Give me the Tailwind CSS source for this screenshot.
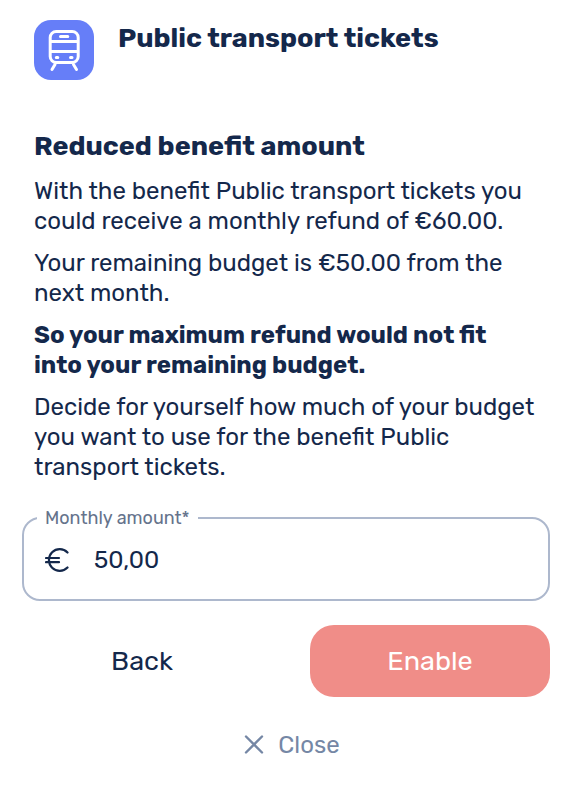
<!DOCTYPE html>
<html lang="en">
<head>
<meta charset="utf-8">
<meta name="viewport" content="width=device-width, initial-scale=1">
<title>Public transport tickets</title>
<script src="https://cdn.jsdelivr.net/npm/@tailwindcss/browser@4"></script>
</head>
<body class="bg-white font-[Rubik,Roboto,sans-serif] text-[#14284b]">
<main class="pt-5 pr-7 pl-[22px]">
  <header class="flex items-start gap-6 px-3">
    <svg class="size-[60px] shrink-0" viewBox="0 0 60 60" fill="none" stroke="#fff" stroke-width="3" stroke-linecap="round" stroke-linejoin="round" aria-hidden="true">
      <rect width="60" height="60" rx="17" fill="#667ef8" stroke="none"/>
      <rect x="16.200" y="11.500" width="28" height="31" rx="6"/>
      <path d="M16 21.500h28M16 31.500h28" stroke-linecap="butt"/>
      <path d="M26.500 16.500h7.300M22.300 37.500h1.500M36.500 37.500h1.500M21 44.500l-3 5M39.500 44.500l3 5"/>
    </svg>
    <h1 class="text-[27px] leading-9 font-bold">Public transport tickets</h1>
  </header>

  <section class="mt-[50px] px-3 text-2xl leading-[30px]">
    <h2 class="text-[27px] leading-8 font-bold">Reduced benefit amount</h2>
    <div class="mt-[14px] flex flex-col gap-3">
      <p>With the benefit Public transport tickets you could receive a monthly refund of €60.00.</p>
      <p>Your remaining budget is €50.00 from the next month.</p>
      <p class="font-bold">So your maximum refund would not fit into your remaining budget.</p>
      <p>Decide for yourself how much of your budget you want to use for the benefit Public transport tickets.</p>
    </div>
  </section>

  <form id="benefit" class="mt-6">
    <fieldset class="rounded-[18px] border-2 border-[#adb8cd] pl-[13px]">
      <legend class="px-2 text-lg leading-6 text-[#65738c]"><label for="amount">Monthly amount*</label></legend>
      <div class="flex items-center gap-[25px] px-2 pt-[14px] pb-[23px]">
        <svg class="h-8 w-6 shrink-0" viewBox="0 0 24 32" fill="none" stroke="#14284b" stroke-width="2.200" stroke-linecap="round" aria-hidden="true">
          <path d="M22.500 8.500A10.800 10.800 0 1 0 22.500 23.500M1 14h13M1 18.200h13"/>
        </svg>
        <input id="amount" type="text" inputmode="decimal" value="50,00" class="h-8 w-full min-w-0 bg-transparent text-2xl outline-none">
      </div>
    </fieldset>

    <div class="mt-6 grid grid-cols-2 gap-12 text-[27px] leading-8">
      <button type="button" class="h-[72px] rounded-3xl">Back</button>
      <button type="submit" class="h-[72px] rounded-3xl bg-[#f08d88] text-white">Enable</button>
    </div>
  </form>
</main>
<footer class="flex justify-center pt-8 pb-6">
  <button type="button" class="flex h-8 items-center gap-3 pr-3 pl-4 text-2xl text-[#7587a5]">
    <svg class="size-6" viewBox="0 0 24 24" fill="none" stroke="currentColor" stroke-width="2.400" stroke-linecap="round" aria-hidden="true"><path d="M4 3.500l16 16M20 3.500l-16 16"/></svg>
    Close
  </button>
</footer>
</body>
</html>
